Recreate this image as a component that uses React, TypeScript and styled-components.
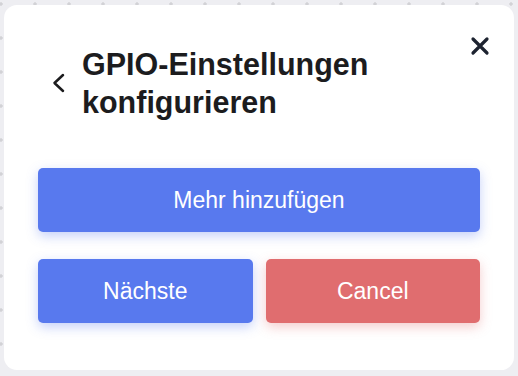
import styled, { createGlobalStyle } from "styled-components";

const GlobalStyle = createGlobalStyle`
  html, body {
    margin: 0;
    padding: 0;
  }
  body {
    font-family: "Liberation Sans", Arial, sans-serif;
    background-color: #eeeef2;
    background-image: radial-gradient(circle, #d2d2d6 1.4px, transparent 2px);
    background-size: 34px 34px;
    background-position: -16px -13px;
    min-height: 376px;
  }
`;

function App() {
  return (
    <StyledPage>
      <GlobalStyle />
      <StyledCard>
        <StyledHeader>
          <StyledBack aria-label="Zurück">
            <svg width="13" height="20" viewBox="0 0 13 20">
              <path
                d="M11 2 L2.5 10 L11 18"
                fill="none"
                stroke="#1c1c1e"
                strokeWidth="2.5"
                strokeLinecap="round"
                strokeLinejoin="round"
              />
            </svg>
          </StyledBack>
          <StyledTitle>GPIO-Einstellungen konfigurieren</StyledTitle>
          <StyledClose aria-label="Schließen">
            <svg width="20" height="20" viewBox="0 0 20 20">
              <path
                d="M3 3 L17 17 M17 3 L3 17"
                fill="none"
                stroke="#1d2330"
                strokeWidth="3.2"
                strokeLinecap="round"
              />
            </svg>
          </StyledClose>
        </StyledHeader>

        <StyledActions>
          <StyledBtn>Mehr hinzufügen</StyledBtn>
          <StyledRow>
            <StyledBtn>Nächste</StyledBtn>
            <StyledBtn $danger>Cancel</StyledBtn>
          </StyledRow>
        </StyledActions>
      </StyledCard>
    </StyledPage>
  );
}

const StyledPage = styled.div`
  padding: 5px 4px 6px 4px;
`;

const StyledCard = styled.div`
  box-sizing: border-box;
  width: 510px;
  height: 365px;
  background: #ffffff;
  border-radius: 13px;
  padding: 40px 34px 46px 34px;
  display: flex;
  flex-direction: column;
  gap: 47px;
`;

const StyledHeader = styled.div`
  display: grid;
  grid-template-columns: auto 1fr auto;
  align-items: center;
  padding-left: 14px;
  margin-right: -10px;
`;

const StyledBack = styled.button`
  border: 0;
  background: none;
  padding: 0;
  margin-right: 17px;
  display: flex;
  cursor: pointer;
`;

const StyledTitle = styled.h2`
  margin: 0;
  font-size: 30.5px;
  line-height: 38px;
  font-weight: 700;
  color: #1c1c1e;
  max-width: 300px;
`;

const StyledClose = styled.button`
  align-self: start;
  margin-top: -9px;
  border: 0;
  background: none;
  padding: 0;
  display: flex;
  cursor: pointer;
`;

const StyledActions = styled.div`
  display: flex;
  flex-direction: column;
  gap: 27px;
`;

const StyledRow = styled.div`
  display: flex;
  gap: 13px;

  & > button {
    flex: 1;
  }
`;

const StyledBtn = styled.button<{ $danger?: boolean }>`
  height: 64px;
  flex-shrink: 0;
  border: 0;
  border-radius: 5px;
  background: ${(p) => (p.$danger ? "#e06d6f" : "#5879ee")};
  color: #ffffff;
  font-family: "Liberation Sans", Arial, sans-serif;
  font-size: 23px;
  box-shadow: 0 4px 12px
    ${(p) => (p.$danger ? "rgba(224, 109, 111, 0.35)" : "rgba(88, 121, 238, 0.35)")};
  cursor: pointer;
`;

export default App;
